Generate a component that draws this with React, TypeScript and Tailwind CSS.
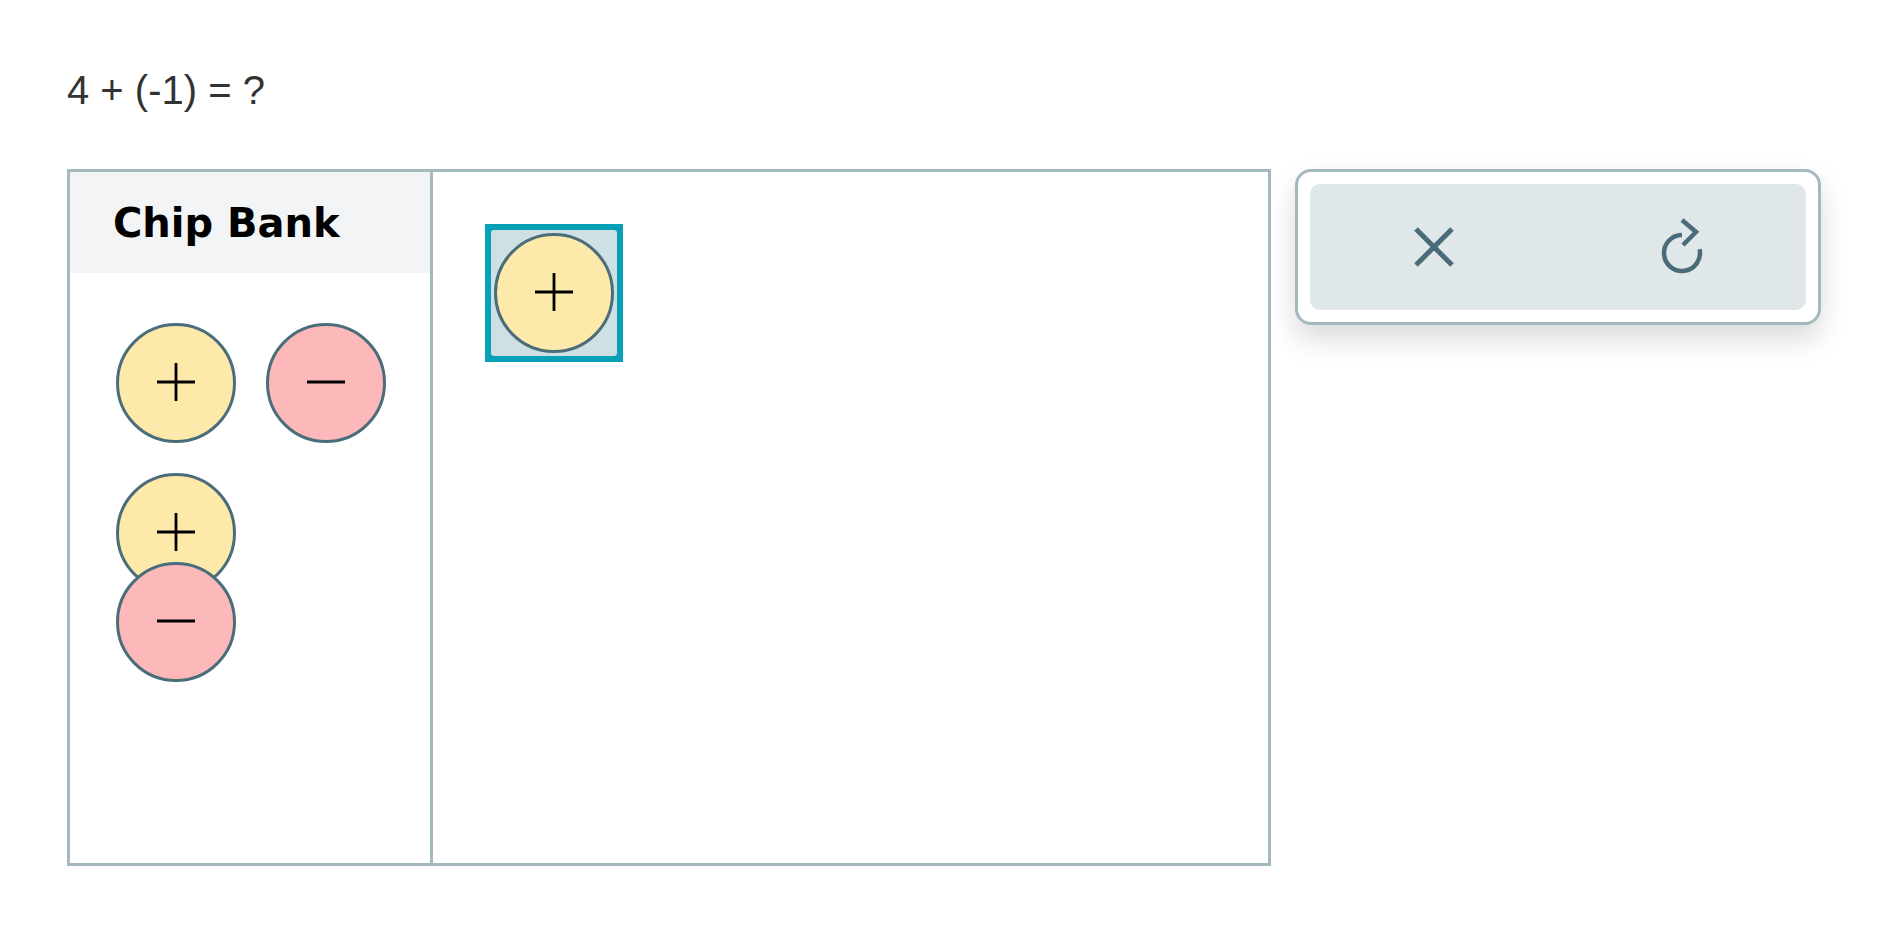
import clsx from "clsx";

function Chip({ sign }: { sign: "+" | "-" }) {
  return (
    <div
      className={clsx(
        "flex h-[120px] w-[120px] shrink-0 items-center justify-center rounded-full border-[3px] border-[#4b6d79]",
        sign === "+" ? "bg-[#fdeaab]" : "bg-[#fdb8b9]"
      )}
    >
      <svg width="40" height="40" viewBox="0 0 40 40" className="-mt-[2px]">
        <line x1="1" y1="20" x2="39" y2="20" stroke="#000" strokeWidth="2.8" />
        {sign === "+" && <line x1="20" y1="1" x2="20" y2="39" stroke="#000" strokeWidth="2.8" />}
      </svg>
    </div>
  );
}

function CloseIcon() {
  return (
    <svg width="40" height="40" viewBox="0 0 40 40">
      <path d="M2 2 L38 38 M38 2 L2 38" stroke="#4a6b78" strokeWidth="5" fill="none" />
    </svg>
  );
}

function RedoIcon() {
  return (
    <svg width="42" height="56" viewBox="0 0 42 56" className="-mt-[2px]">
      <path d="M21 17 A18 18 0 1 0 38.6 31.3" stroke="#4a6b78" strokeWidth="4.5" fill="none" />
      <path d="M21 2 L35 14 L22 27" stroke="#4a6b78" strokeWidth="4.5" fill="none" />
    </svg>
  );
}

export default function App() {
  return (
    <div className="min-h-screen bg-white pl-[67px] pt-[70px] font-['Liberation_Sans',Arial,sans-serif]">
      {/* Question */}
      <div className="text-[40px] leading-[40px] text-[#333333]">4 + (-1) = ?</div>

      <div className="mt-[59px] flex items-start gap-[24px]">
        {/* Board */}
        <div className="flex h-[697px] w-[1204px] border-[3px] border-[#a4b8bf] bg-white">
          {/* Chip bank */}
          <div className="flex w-[363px] flex-col border-r-[3px] border-[#a4b8bf]">
            <div className="flex h-[101px] items-center bg-[#f3f4f6] pl-[43px]">
              <span className="font-['DejaVu_Sans',Verdana,sans-serif] text-[40px] font-bold leading-[40px] text-black">
                Chip Bank
              </span>
            </div>
            <div className="flex flex-col gap-[30px] pl-[46px] pt-[50px]">
              <div className="flex gap-[30px]">
                <Chip sign="+" />
                <Chip sign="-" />
              </div>
              <div className="flex flex-col">
                <Chip sign="+" />
                <div className="-mt-[31px]">
                  <Chip sign="-" />
                </div>
              </div>
            </div>
          </div>

          {/* Work area */}
          <div className="flex-1 pl-[52px] pt-[52px]">
            <div className="h-[138px] w-[138px] bg-[#08a0b6] p-[6px]">
              <div className="flex h-full w-full items-center justify-center rounded-[3px] bg-[#cfe0e4]">
                <Chip sign="+" />
              </div>
            </div>
          </div>
        </div>

        {/* Controls */}
        <div className="w-[526px] rounded-[16px] border-[3px] border-[#a4b8bf] bg-white p-[12px] shadow-[0_14px_28px_rgba(0,0,0,0.15)]">
          <div className="flex h-[126px] rounded-[10px] bg-[#dfe7e9]">
            <button className="flex flex-1 items-center justify-center" aria-label="Clear">
              <CloseIcon />
            </button>
            <button className="flex flex-1 items-center justify-center" aria-label="Redo">
              <RedoIcon />
            </button>
          </div>
        </div>
      </div>
    </div>
  );
}
